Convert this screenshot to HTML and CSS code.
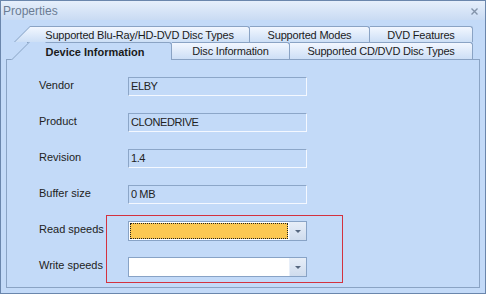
FILE: index.html
```html
<!DOCTYPE html>
<html lang="en">
<head>
    <meta charset="UTF-8">
    <title>Properties</title>
    <link rel="stylesheet" href="styles.css">
</head>
<body>
    <div class="window">
        <div class="titlebar">
            <span class="title">Properties</span>
            <svg class="close" width="7" height="7" viewBox="0 0 7 7">
                <path d="M0.5 0.5 L6.5 6.5 M6.5 0.5 L0.5 6.5" stroke="#8393a9" stroke-width="1.4" fill="none"/>
            </svg>
        </div>
        <div class="content">
            <div class="tabrow row1">
                <div class="tab first w-bluray"><span class="tab-text">Supported Blu-Ray/HD-DVD Disc Types</span></div>
                <div class="tab w-modes"><span class="tab-text">Supported Modes</span></div>
                <div class="tab w-dvd"><span class="tab-text">DVD Features</span></div>
            </div>
            <div class="tabrow row2">
                <div class="tab first selected w-device"><span class="tab-text">Device Information</span></div>
                <div class="tab w-disc"><span class="tab-text">Disc Information</span></div>
                <div class="tab w-cd"><span class="tab-text">Supported CD/DVD Disc Types</span></div>
            </div>
            <div class="page">
                <div class="fields">
                    <div class="label">Vendor</div>
                    <div class="field">ELBY</div>
                    <div class="label">Product</div>
                    <div class="field">CLONEDRIVE</div>
                    <div class="label">Revision</div>
                    <div class="field">1.4</div>
                    <div class="label">Buffer size</div>
                    <div class="field">0 MB</div>
                    <div class="label">Read speeds</div>
                    <div class="combo read">
                        <div class="combo-text"></div>
                        <div class="combo-btn"><span class="arrow"></span></div>
                    </div>
                    <div class="label">Write speeds</div>
                    <div class="combo">
                        <div class="combo-text"></div>
                        <div class="combo-btn"><span class="arrow"></span></div>
                    </div>
                </div>
                <div class="highlight"></div>
            </div>
        </div>
    </div>
</body>
</html>
```

FILE: styles.css
```css
body {
    margin: 0;
    font-family: "Liberation Sans", Arial, sans-serif;
    font-size: 11px;
    color: #1b1b1b;
}
.window {
    position: relative;
    z-index: 0;
    width: 486px;
    height: 294px;
    box-sizing: border-box;
    border: 1px solid #6a86ac;
    background: #c3daf8;
}
.titlebar {
    height: 19px;
    display: flex;
    align-items: center;
    justify-content: space-between;
    padding: 0 7px 0 2px;
    background: linear-gradient(#e6effb, #c9dbf3);
}
.title {
    color: #6b7c93;
    font-size: 12px;
}
.close {
    display: block;
    margin-top: 1px;
}
.content {
    padding: 6px 5px 5px 5px;
}
.tabrow {
    display: flex;
}
.row1 {
    height: 16px;
    padding-left: 24px;
}
.row2 {
    height: 17px;
    padding-left: 21px;
}
.tab {
    position: relative;
    box-sizing: border-box;
    border-top: 1px solid #8aa3c4;
    border-right: 1px solid #8aa3c4;
    border-top-right-radius: 3px;
    background: linear-gradient(#f2f7ff, #cddff6);
    display: flex;
    align-items: center;
    justify-content: center;
    white-space: nowrap;
    letter-spacing: -0.2px;
}
.tab-text {
    position: relative;
}
.tab.first::before {
    content: '';
    position: absolute;
    left: -16px;
    top: -1px;
    bottom: 0;
    width: 16px;
    border-left: 1px solid #8aa3c4;
    background: linear-gradient(#f2f7ff, #cddff6);
    transform: skewX(-45deg);
    transform-origin: bottom left;
    z-index: -1;
}
.tab.selected {
    height: 18px;
    margin-bottom: -1px;
    z-index: 1;
    background: #c3daf8;
    font-weight: bold;
    letter-spacing: 0;
}
.tab.selected::before {
    background: #c3daf8;
}
.w-bluray { width: 220px; }
.w-modes { width: 120px; }
.w-dvd { width: 103px; }
.w-device { width: 145px; padding-right: 8px; }
.w-disc { width: 118px; }
.w-cd { width: 183px; }
.page {
    position: relative;
    height: 229px;
    box-sizing: border-box;
    border: 1px solid #8aa3c4;
    padding: 17px 0 0 32px;
}
.fields {
    display: grid;
    grid-template-columns: 89px 179px;
    grid-auto-rows: 19px;
    row-gap: 17px;
}
.label {
    padding-top: 1px;
    line-height: 14px;
    color: #222;
}
.field {
    box-sizing: border-box;
    border: 1px solid;
    border-color: #8ca6c8 #f4f8ff #f4f8ff #8ca6c8;
    padding-left: 2px;
    line-height: 17px;
    letter-spacing: -0.4px;
    color: #222;
}
.combo {
    display: flex;
    box-sizing: border-box;
    border: 1px solid #88a3c6;
    background: #fff;
    height: 20px;
}
.combo-text {
    flex: 1;
    margin: 1px;
}
.combo.read .combo-text {
    background: #fbc852;
    outline: 1px dotted #222;
    outline-offset: -1px;
}
.combo-btn {
    width: 16px;
    border-left: 1px solid #e8eff9;
    background: linear-gradient(#e7eef8, #cfdcee);
    display: flex;
    align-items: center;
    justify-content: center;
}
.arrow {
    width: 0;
    height: 0;
    border-left: 3px solid transparent;
    border-right: 3px solid transparent;
    border-top: 3px solid #56677f;
}
.highlight {
    position: absolute;
    left: 99px;
    top: 155px;
    width: 237px;
    height: 68px;
    box-sizing: border-box;
    border: 1px solid #d3323f;
}
```
